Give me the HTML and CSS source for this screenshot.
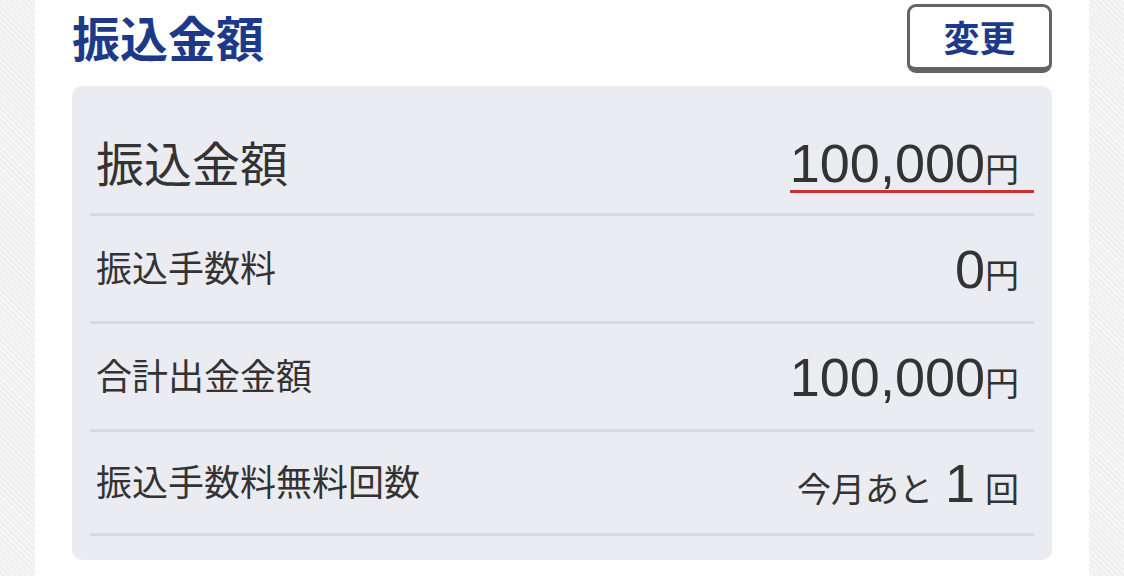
FILE: index.html
```html
<!DOCTYPE html>
<html lang="ja">
<head>
<meta charset="utf-8">
<title>振込金額</title>
<link rel="stylesheet" href="styles.css">
</head>
<body>
<div class="page">
  <div class="card">
    <div class="header">
      <h1 class="title">振込金額</h1>
      <button class="change-btn" type="button">変更</button>
    </div>
    <div class="summary">
      <div class="row row-main">
        <span class="label label-main">振込金額</span>
        <span class="value value-underline"><span class="num">100,000</span><span class="unit">円</span></span>
      </div>
      <div class="row">
        <span class="label">振込手数料</span>
        <span class="value"><span class="num">0</span><span class="unit">円</span></span>
      </div>
      <div class="row">
        <span class="label">合計出金金額</span>
        <span class="value"><span class="num">100,000</span><span class="unit">円</span></span>
      </div>
      <div class="row row-last">
        <span class="label">振込手数料無料回数</span>
        <span class="value"><span class="unit">今月あと</span><span class="num num-count">1</span><span class="unit">回</span></span>
      </div>
    </div>
  </div>
</div>
</body>
</html>
```

FILE: styles.css
```css
html, body {
  margin: 0;
  padding: 0;
}

body {
  width: 1124px;
  height: 576px;
  overflow: hidden;
  background-color: #f3f3f3;
  background-image: repeating-linear-gradient(45deg, #f6f6f6 0, #f6f6f6 2px, #efefef 2px, #efefef 4px);
  font-family: "Noto Sans CJK JP", sans-serif;
  color: #333333;
}

.page {
  display: flex;
  padding: 0 35px;
  height: 576px;
}

.card {
  flex: 1;
  background: #ffffff;
  padding: 0 37px;
}

.header {
  display: flex;
  justify-content: space-between;
  align-items: center;
  padding-top: 4px;
  height: 69px;
}

.title {
  margin: 0;
  font-size: 48px;
  font-weight: 700;
  line-height: 1;
  color: #1d3a8a;
  margin-top: -6px;
}

.change-btn {
  box-sizing: border-box;
  width: 145px;
  height: 69px;
  background: #ffffff;
  border: 3px solid #646464;
  border-bottom-width: 6px;
  border-radius: 9px;
  font-family: "Noto Sans CJK JP", sans-serif;
  font-size: 36px;
  font-weight: 700;
  color: #1d3a8a;
  line-height: 1;
  padding: 0 0 2px 0;
}

.summary {
  margin-top: 13px;
  background: #ebecf1;
  border-radius: 10px;
  padding: 27px 18px 24px;
}

.row {
  display: flex;
  justify-content: space-between;
  align-items: center;
  height: 105px;
  padding-left: 6px;
  border-bottom: 3px solid #d8d9de;
}

.row-main {
  height: 100px;
}

.row-last {
  height: 101px;
}

.label {
  font-size: 36px;
  line-height: 1;
  color: #333333;
  margin-top: -6px;
}

.label-main {
  font-size: 48px;
  margin-top: -4px;
}

.value {
  display: flex;
  align-items: baseline;
  padding-right: 15px;
  font-family: "Liberation Sans", "Noto Sans CJK JP", sans-serif;
  color: #333333;
}

.value-underline {
  border-bottom: 3px solid #d0302c;
  margin-top: 2px;
}

.num {
  font-size: 54px;
  line-height: 1;
}

.num-count {
  margin: 0 10px 0 12px;
}

.unit {
  font-family: "Noto Sans CJK JP", sans-serif;
  font-size: 34px;
  line-height: 1;
}
```
